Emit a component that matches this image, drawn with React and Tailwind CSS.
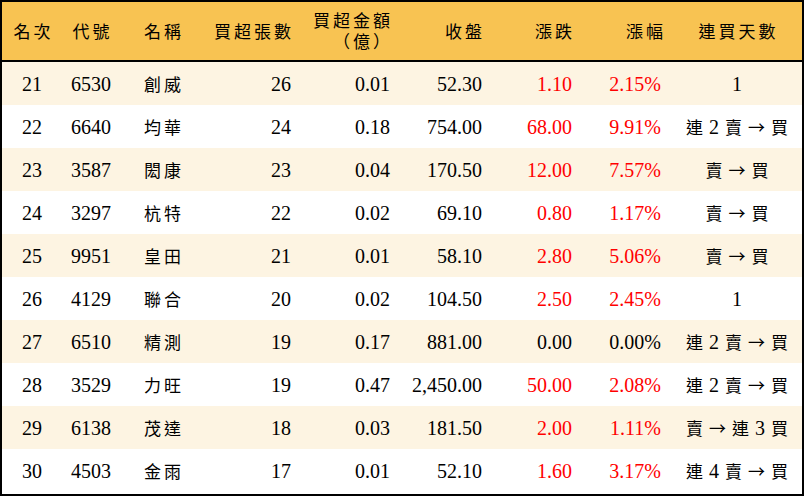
import React from 'react'

const rows = [
  { rank: 21, code: '6530', name: '創威', lots: 26, amount: '0.01', close: '52.30', chg: '1.10', pct: '2.15%', days: '1', up: true },
  { rank: 22, code: '6640', name: '均華', lots: 24, amount: '0.18', close: '754.00', chg: '68.00', pct: '9.91%', days: '連 2 賣 → 買', up: true },
  { rank: 23, code: '3587', name: '閎康', lots: 23, amount: '0.04', close: '170.50', chg: '12.00', pct: '7.57%', days: '賣 → 買', up: true },
  { rank: 24, code: '3297', name: '杭特', lots: 22, amount: '0.02', close: '69.10', chg: '0.80', pct: '1.17%', days: '賣 → 買', up: true },
  { rank: 25, code: '9951', name: '皇田', lots: 21, amount: '0.01', close: '58.10', chg: '2.80', pct: '5.06%', days: '賣 → 買', up: true },
  { rank: 26, code: '4129', name: '聯合', lots: 20, amount: '0.02', close: '104.50', chg: '2.50', pct: '2.45%', days: '1', up: true },
  { rank: 27, code: '6510', name: '精測', lots: 19, amount: '0.17', close: '881.00', chg: '0.00', pct: '0.00%', days: '連 2 賣 → 買', up: false },
  { rank: 28, code: '3529', name: '力旺', lots: 19, amount: '0.47', close: '2,450.00', chg: '50.00', pct: '2.08%', days: '連 2 賣 → 買', up: true },
  { rank: 29, code: '6138', name: '茂達', lots: 18, amount: '0.03', close: '181.50', chg: '2.00', pct: '1.11%', days: '賣 → 連 3 買', up: true },
  { rank: 30, code: '4503', name: '金雨', lots: 17, amount: '0.01', close: '52.10', chg: '1.60', pct: '3.17%', days: '連 4 賣 → 買', up: true },
]

const cols = 'grid grid-cols-[60px_58px_80px_99px_99px_92px_90px_92px_130px]'
const zh = "font-['Noto_Sans_CJK_TC',sans-serif] text-[17px] tracking-[3px]"
const cjk = "font-['Noto_Sans_CJK_TC',sans-serif] text-[17px]"

function Days({ text }) {
  const parts = text.split(' ')
  return (
    <div className="flex justify-center items-center gap-[6px] whitespace-nowrap">
      {parts.map((p, i) =>
        /\d/.test(p) ? (
          <span key={i} className="text-[20px]">{p}</span>
        ) : (
          <span key={i} className={cjk}>{p}</span>
        )
      )}
    </div>
  )
}

export default function App() {
  return (
    <div className="w-[804px] h-[496px] bg-white border-2 border-black font-['Liberation_Serif','Noto_Sans_CJK_TC',serif] text-black overflow-hidden">
      <div className={`${cols} h-[60px] bg-[#f8c352] border-b-2 border-black items-center ${zh}`}>
        <div className="text-center pl-[3px]">名次</div>
        <div className="text-center pl-[3px]">代號</div>
        <div className="pl-[24px]">名稱</div>
        <div className="text-right pr-[5px]">買超張數</div>
        <div className="flex flex-col items-end pr-[5px] leading-[20px] gap-[1px] -mt-[2px]">
          <span>買超金額</span>
          <span>（億）</span>
        </div>
        <div className="text-right pr-[5px]">收盤</div>
        <div className="text-right pr-[5px]">漲跌</div>
        <div className="text-right pr-[6px]">漲幅</div>
        <div className="text-center pl-[3px]">連買天數</div>
      </div>
      {rows.map((r, i) => (
        <div
          key={r.rank}
          className={`${cols} h-[43px] items-center text-[20px] ${i % 2 === 0 ? 'bg-[#fdf4e2]' : 'bg-white'}`}
        >
          <div className="text-center">{r.rank}</div>
          <div className="text-center">{r.code}</div>
          <div className={`pl-[24px] ${zh}`}>{r.name}</div>
          <div className="text-right pr-[8px]">{r.lots}</div>
          <div className="text-right pr-[8px]">{r.amount}</div>
          <div className="text-right pr-[8px]">{r.close}</div>
          <div className={`text-right pr-[8px] ${r.up ? 'text-[#ff0000]' : ''}`}>{r.chg}</div>
          <div className={`text-right pr-[11px] ${r.up ? 'text-[#ff0000]' : ''}`}>{r.pct}</div>
          <Days text={r.days} />
        </div>
      ))}
    </div>
  )
}
